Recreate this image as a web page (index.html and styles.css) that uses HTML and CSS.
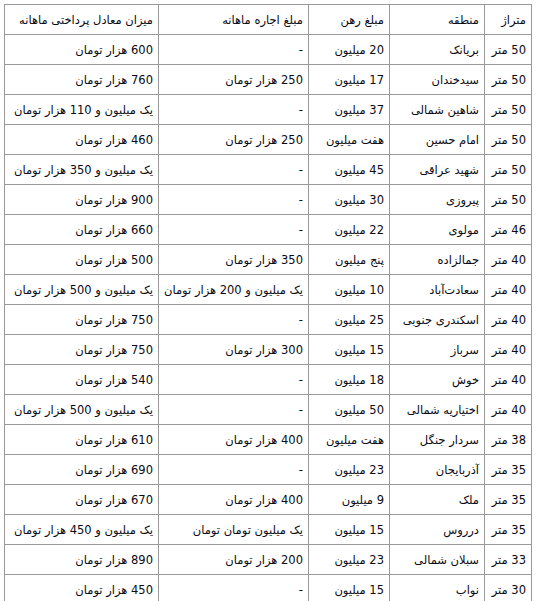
FILE: index.html
```html
<!DOCTYPE html>
<html lang="fa">
<head>
<meta charset="utf-8">
<title>اجاره</title>
<link rel="stylesheet" href="styles.css">
</head>
<body>
<table class="rent" dir="rtl">
<colgroup>
<col class="c-size"><col class="c-area"><col class="c-dep"><col class="c-rent"><col class="c-eq">
</colgroup>
<thead>
<tr><th>متراژ</th><th>منطقه</th><th>مبلغ رهن</th><th>مبلغ اجاره ماهانه</th><th>میزان معادل پرداختی ماهانه</th></tr>
</thead>
<tbody>
<tr><td>50 متر</td><td>بریانک</td><td>20 میلیون</td><td>-</td><td>600 هزار تومان</td></tr>
<tr><td>50 متر</td><td>سیدخندان</td><td>17 میلیون</td><td>250 هزار تومان</td><td>760 هزار تومان</td></tr>
<tr><td>50 متر</td><td>شاهین شمالی</td><td>37 میلیون</td><td>-</td><td>یک میلیون و 110 هزار تومان</td></tr>
<tr><td>50 متر</td><td>امام حسین</td><td>هفت میلیون</td><td>250 هزار تومان</td><td>460 هزار تومان</td></tr>
<tr><td>50 متر</td><td>شهید عراقی</td><td>45 میلیون</td><td>-</td><td>یک میلیون و 350 هزار تومان</td></tr>
<tr><td>50 متر</td><td>پیروزی</td><td>30 میلیون</td><td>-</td><td>900 هزار تومان</td></tr>
<tr><td>46 متر</td><td>مولوی</td><td>22 میلیون</td><td>-</td><td>660 هزار تومان</td></tr>
<tr><td>40 متر</td><td>جمالزاده</td><td>پنج میلیون</td><td>350 هزار تومان</td><td>500 هزار تومان</td></tr>
<tr><td>40 متر</td><td>سعادت‌آباد</td><td>10 میلیون</td><td>یک میلیون و 200 هزار تومان</td><td>یک میلیون و 500 هزار تومان</td></tr>
<tr><td>40 متر</td><td>اسکندری جنوبی</td><td>25 میلیون</td><td>-</td><td>750 هزار تومان</td></tr>
<tr><td>40 متر</td><td>سرباز</td><td>15 میلیون</td><td>300 هزار تومان</td><td>750 هزار تومان</td></tr>
<tr><td>40 متر</td><td>خوش</td><td>18 میلیون</td><td>-</td><td>540 هزار تومان</td></tr>
<tr><td>40 متر</td><td>اختیاریه شمالی</td><td>50 میلیون</td><td>-</td><td>یک میلیون و 500 هزار تومان</td></tr>
<tr><td>38 متر</td><td>سردار جنگل</td><td>هفت میلیون</td><td>400 هزار تومان</td><td>610 هزار تومان</td></tr>
<tr><td>35 متر</td><td>آذربایجان</td><td>23 میلیون</td><td>-</td><td>690 هزار تومان</td></tr>
<tr><td>35 متر</td><td>ملک</td><td>9 میلیون</td><td>400 هزار تومان</td><td>670 هزار تومان</td></tr>
<tr><td>35 متر</td><td>درروس</td><td>15 میلیون</td><td>یک میلیون تومان تومان</td><td>یک میلیون و 450 هزار تومان</td></tr>
<tr><td>33 متر</td><td>سبلان شمالی</td><td>23 میلیون</td><td>200 هزار تومان</td><td>890 هزار تومان</td></tr>
<tr><td>30 متر</td><td>نواب</td><td>15 میلیون</td><td>-</td><td>450 هزار تومان</td></tr>
</tbody>
</table>
</body>
</html>
```
FILE: styles.css
```css
html, body {
  margin: 0;
  padding: 0;
  background: #ffffff;
}
body {
  padding: 4px 0 0 4px;
  font-family: "DejaVu Sans", Tahoma, sans-serif;
  font-size: 11.5px;
  color: #0a0a14;
}
.rent {
  border-collapse: collapse;
  table-layout: fixed;
  width: 527px;
  border: 1px solid #999999;
}
.c-size { width: 47px; }
.c-area { width: 95px; }
.c-dep { width: 81px; }
.c-rent { width: 150px; }
.c-eq { width: 154px; }
.rent th,
.rent td {
  border: 1px solid #999999;
  height: 30px;
  padding: 0 5px 0 2px;
  text-align: right;
  vertical-align: middle;
  font-weight: normal;
  white-space: nowrap;
  overflow: hidden;
  box-sizing: border-box;
}
```
